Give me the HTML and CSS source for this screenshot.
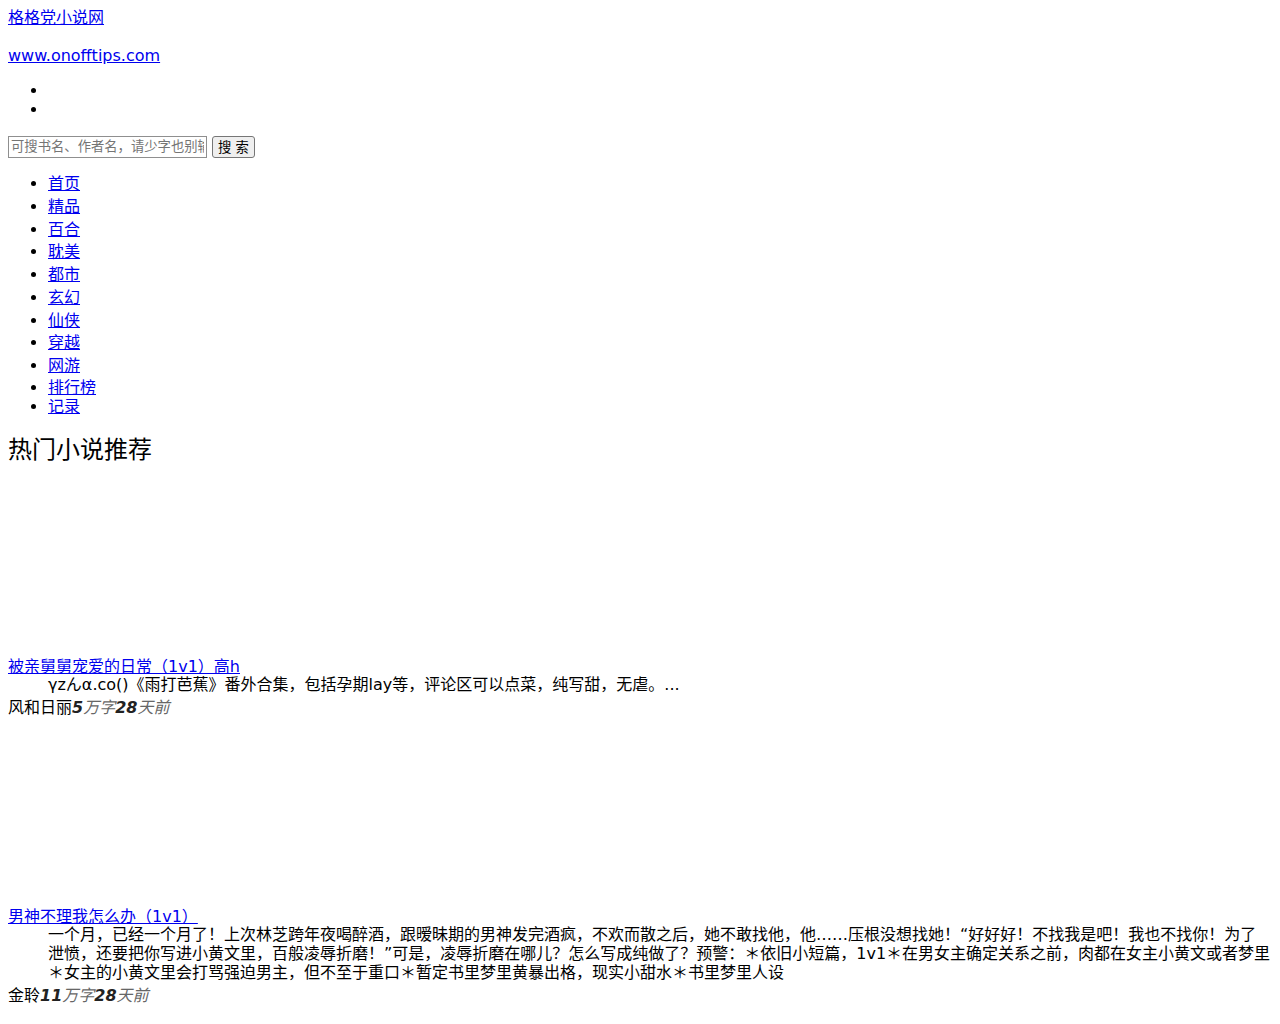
FILE: index.html
```html
<!DOCTYPE html>
<html>
<head>
    <meta charset='utf-8'>
    <title>格格党小说网</title>
    <link rel="stylesheet" href="styles.css">
</head>
<body>
    <div class="logo"><a href="#">格格党小说网</a></div>
    <p class="site"><a href="#">www.onofftips.com</a></p>
    <ul class="user">
        <li></li>
        <li></li>
    </ul>
    <form class="search">
        <input type="text" placeholder="可搜书名、作者名，请少字也别输错">
        <button type="button">搜 索</button>
    </form>
    <ul class="nav">
        <li class="tall"><a href="#">首页</a></li>
        <li class="tall"><a href="#">精品</a></li>
        <li class="tall"><a href="#">百合</a></li>
        <li class="tall"><a href="#">耽美</a></li>
        <li class="tall"><a href="#">都市</a></li>
        <li class="tall"><a href="#">玄幻</a></li>
        <li class="tall"><a href="#">仙侠</a></li>
        <li class="tall"><a href="#">穿越</a></li>
        <li class="tall"><a href="#">网游</a></li>
        <li><a href="#">排行榜</a></li>
        <li><a href="#">记录</a></li>
    </ul>
    <h2>热门小说推荐</h2>
    <div class="book">
        <div class="cover first"></div>
        <div class="title"><a href="#">被亲舅舅宠爱的日常（1v1）高h</a></div>
        <div class="intro">γzんα.co()《雨打芭蕉》番外合集，包括孕期lay等，评论区可以点菜，纯写甜，无虐。...</div>
        <div class="meta">风和日丽<em><b>5</b>万字</em><em><b>28</b>天前</em></div>
    </div>
    <div class="book">
        <div class="cover"></div>
        <div class="title"><a href="#">男神不理我怎么办（1v1）</a></div>
        <div class="intro">一个月，已经一个月了！上次林芝跨年夜喝醉酒，跟暧昧期的男神发完酒疯，不欢而散之后，她不敢找他，他……压根没想找她！“好好好！不找我是吧！我也不找你！为了泄愤，还要把你写进小黄文里，百般凌辱折磨！”可是，凌辱折磨在哪儿？怎么写成纯做了？预警：＊依旧小短篇，1v1＊在男女主确定关系之前，肉都在女主小黄文或者梦里＊女主的小黄文里会打骂强迫男主，但不至于重口＊暂定书里梦里黄暴出格，现实小甜水＊书里梦里人设</div>
        <div class="meta">金聆<em><b>11</b>万字</em><em><b>28</b>天前</em></div>
    </div>
</body>
</html>
```

FILE: styles.css
```css
body{
    margin: 8px;
    font-family: "DejaVu Sans", "Noto Sans CJK SC", sans-serif;
    font-size: 16px;
    line-height: 19px;
    color: #000;
}
a{
    color: #0000EE;
}
.logo{
    height: 19px;
}
.site{
    margin: 19px 0 16px;
}
.user{
    margin: 16px 0;
    padding-left: 40px;
}
.search{
    margin: 0;
    display: flex;
    align-items: center;
    gap: 5px;
    height: 23px;
}
.search input{
    width: 199px;
    height: 22px;
    box-sizing: border-box;
    padding: 1px 2px;
    font-size: 13.33px;
    font-family: "DejaVu Sans", "Noto Sans CJK SC", sans-serif;
    border: 1px solid #8f8f8f;
    margin: 0;
}
.search button{
    height: 22px;
    padding: 0 5px;
    font-size: 13.33px;
    font-family: "DejaVu Sans", "Noto Sans CJK SC", sans-serif;
    border: 1px solid #767676;
    border-radius: 3px;
    background: #efefef;
    margin: 0;
}
.nav{
    margin: 15px 0 0;
    padding-left: 40px;
}
.nav li.tall{
    line-height: 22.75px;
}
h2{
    font-size: 24px;
    font-weight: normal;
    line-height: 28px;
    margin: 20px 0 20px;
}
.cover{
    height: 188px;
}
.cover.first{
    height: 173px;
}
.intro{
    padding-left: 40px;
    margin-top: -1px;
}
.meta{
    line-height: 23px;
    margin-top: 2px;
}
.meta em{
    color: #666;
}
.meta b{
    color: #222;
}
```
